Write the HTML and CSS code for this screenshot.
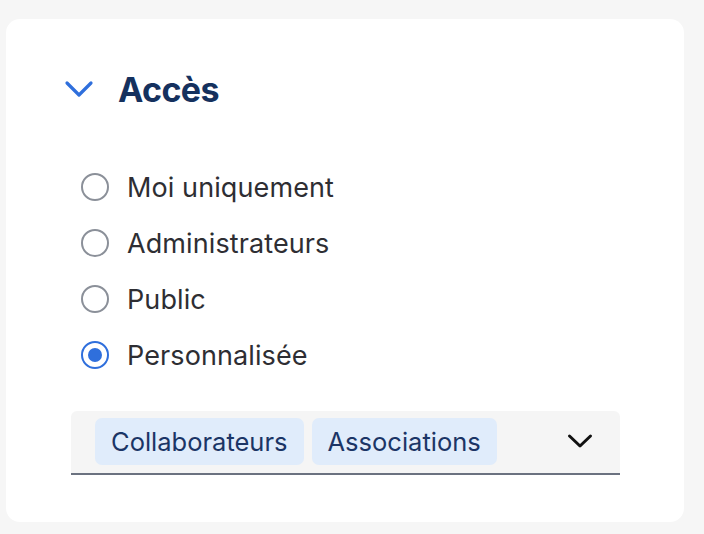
FILE: index.html
```html
<!DOCTYPE html>
<html lang="fr">
<head>
<meta charset="utf-8">
<link rel="stylesheet" href="styles.css">
</head>
<body>
<div class="card">
  <div class="header">
    <svg class="chev" width="30" height="18" viewBox="0 0 30 18"><path d="M3 3 L15 15 L27 3" fill="none" stroke="#2f6fdc" stroke-width="3.2" stroke-linecap="round" stroke-linejoin="round"/></svg>
    <h2 class="title">Accès</h2>
  </div>
  <div class="options">
    <label class="opt"><span class="radio"></span><span>Moi uniquement</span></label>
    <label class="opt"><span class="radio"></span><span>Administrateurs</span></label>
    <label class="opt"><span class="radio"></span><span>Public</span></label>
    <label class="opt"><span class="radio checked"></span><span>Personnalisée</span></label>
  </div>
  <div class="select">
    <span class="chip">Collaborateurs</span>
    <span class="chip">Associations</span>
    <svg class="caret" width="26" height="16" viewBox="0 0 26 16"><path d="M2.5 3 L13 13 L23.5 3" fill="none" stroke="#111" stroke-width="3" stroke-linecap="round" stroke-linejoin="round"/></svg>
  </div>
</div>
</body>
</html>
```
FILE: styles.css
```css
html, body { margin: 0; padding: 0; }
body {
  background: #f6f6f6;
  font-family: Inter, "Noto Sans", sans-serif;
  width: 704px;
  height: 534px;
  overflow: hidden;
}
.card {
  margin: 19px 0 0 6px;
  width: 678px;
  height: 503px;
  background: #fff;
  border-radius: 14px;
  box-sizing: border-box;
  padding: 0 0 0 58px;
}
.header {
  display: flex;
  align-items: center;
  height: 140px;
}
.title {
  margin: 0 0 0 24px;
  font-size: 34px;
  font-weight: 700;
  color: #15315e;
  letter-spacing: -0.6px;
}
.options {
  display: flex;
  flex-direction: column;
  margin-left: 17px;
}
.opt {
  display: flex;
  align-items: center;
  height: 56px;
  font-size: 27px;
  color: #2e2e33;
  letter-spacing: 0.1px;
}
.radio {
  width: 24px;
  height: 24px;
  border: 2px solid #8b9099;
  border-radius: 50%;
  margin-right: 18px;
  box-sizing: content-box;
  position: relative;
  flex: none;
}
.radio.checked {
  border-color: #2f6fdc;
}
.radio.checked::after {
  content: "";
  position: absolute;
  left: 5px; top: 5px;
  width: 14px; height: 14px;
  border-radius: 50%;
  background: #2f6fdc;
}
.select {
  margin: 28px 0 0 7px;
  width: 549px;
  height: 64px;
  background: #f5f5f5;
  border-radius: 6px 6px 0 0;
  border-bottom: 2px solid #6b7280;
  box-sizing: border-box;
  display: flex;
  align-items: center;
  padding: 2px 0 4px 24px;
  gap: 8px;
}
.chip {
  background: #e0ecfb;
  color: #1b3566;
  font-size: 25.5px;
  border-radius: 7px;
  padding: 0 16px;
  height: 47px;
  display: flex;
  align-items: center;
}
.caret { margin-left: auto; margin-right: 27px; }
```
